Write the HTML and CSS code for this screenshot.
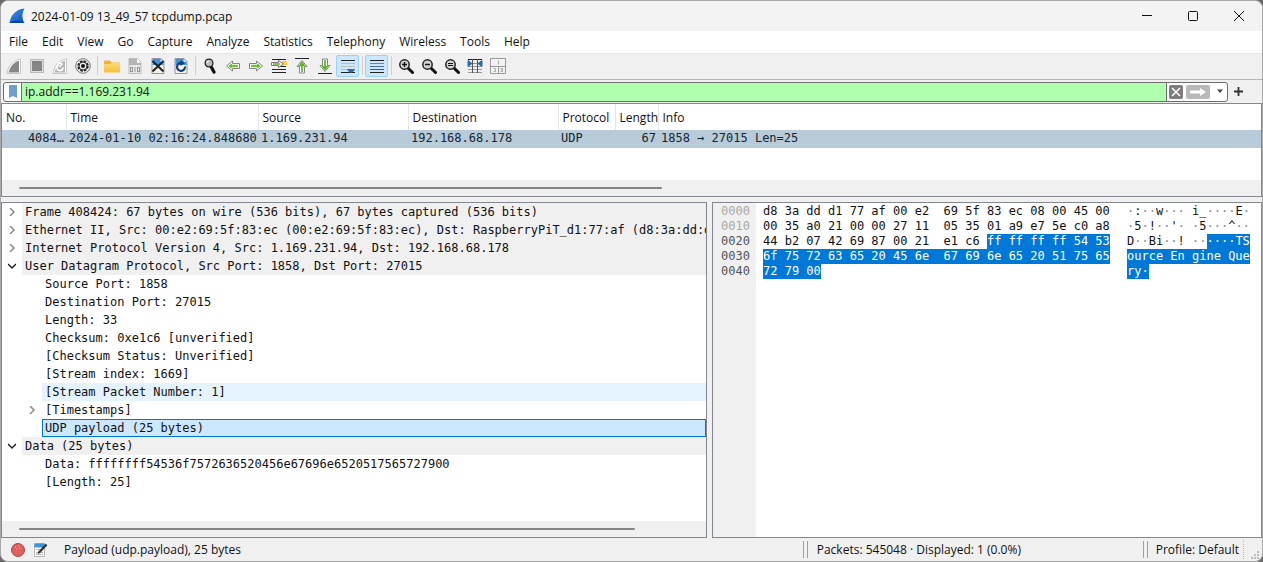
FILE: index.html
```html
<!DOCTYPE html>
<html lang="en">
<head>
<meta charset="utf-8">
<title>2024-01-09 13_49_57 tcpdump.pcap</title>
<link rel="stylesheet" href="styles.css">
</head>
<body>
<svg class="defs" width="0" height="0" aria-hidden="true">
  <defs>
    <linearGradient id="finBlue" x1="0" y1="0" x2="1" y2="1"><stop offset="0" stop-color="#4a9af0"/><stop offset="1" stop-color="#0a47b8"/></linearGradient>
    <linearGradient id="folder" x1="0" y1="0" x2="0" y2="1"><stop offset="0" stop-color="#ffd978"/><stop offset="1" stop-color="#f8bf3c"/></linearGradient>
    <symbol id="arrow" viewBox="0 0 16 16"><path d="M1.500 5.500h7V3L14.500 8 8.500 13v-2.500h-7z" fill="#fff" stroke="#858585"/><path d="M3.500 7.200h6V6l2.800 2-2.800 2V8.800h-6z" fill="#5cb81c" stroke="#5cb81c" stroke-width=".6"/></symbol>
    <symbol id="lens" viewBox="0 0 16 16"><path d="M10 10l4.500 4.500" stroke="#111" stroke-width="3" stroke-linecap="round"/><circle cx="6.500" cy="6.500" r="4.700" fill="#d4d4d4" stroke="#222" stroke-width="1.500"/></symbol>
    <symbol id="page" viewBox="0 0 16 16"><path d="M2 .5h9L14 3.500v12H2z" fill="#f4f3e6" stroke="#8c98a4"/><path d="M2.500 1h8.300l2.700 2.700V7h-11z" fill="#3b94dc"/><path d="M10.500 1v3h3z" fill="#d8e9f5"/></symbol>
  </defs>
</svg>
<div class="window">
  <header class="titlebar">
    <svg class="app-icon" viewBox="0 0 16 16"><path d="M.5 15C1.500 7 6.500 1.500 15.500.5 12.500 5.500 13 11 15.500 15z" fill="url(#finBlue)"/><path d="M.5 15c1-1.500 3-2.500 7-2.500s6 1 8 2.500z" fill="#0845a8"/></svg>
    <h1 class="title">2024-01-09 13_49_57 tcpdump.pcap</h1>
    <div class="caption">
      <button aria-label="Minimize"><svg viewBox="0 0 12 12"><path d="M1 5.500h10" stroke="#111"/></svg></button>
      <button aria-label="Maximize"><svg viewBox="0 0 12 12"><rect x="1.500" y="1.500" width="9" height="9" rx="1" fill="none" stroke="#111"/></svg></button>
      <button aria-label="Close"><svg viewBox="0 0 12 12"><path d="M1 1l10 10M11 1L1 11" stroke="#111"/></svg></button>
    </div>
  </header>
  <nav class="menubar">
    <button>File</button><button>Edit</button><button>View</button><button>Go</button><button>Capture</button><button>Analyze</button><button>Statistics</button><button>Telephony</button><button>Wireless</button><button>Tools</button><button>Help</button>
  </nav>
  <div class="toolbar" role="toolbar">
    <button aria-label="Start capture"><svg viewBox="0 0 16 16"><path d="M1 15.500C2 8 7 2 14.500 1v14.500z" fill="#fff" stroke="#c4c4c4"/><path d="M2.500 14.500C4 8.500 8 4 13 2.800v11.700z" fill="#868686"/></svg></button>
    <button aria-label="Stop capture"><svg viewBox="0 0 16 16"><rect x="1.500" y="1.500" width="13" height="13" fill="#ddd" stroke="#bbb"/><rect x="3" y="3" width="10" height="10" fill="#858585"/></svg></button>
    <button aria-label="Restart capture"><svg viewBox="0 0 16 16"><path d="M1 15.500C2 8 7 2 14.500 1v14.500z" fill="#fff" stroke="#c4c4c4"/><path d="M2.500 14.500C4 8.500 8 4 13 2.800v11.700z" fill="#b4b4b4"/><path d="M11 9.500A3 3 0 1 1 7 6.800M6 4.800l4 1.300-2.500 3" fill="none" stroke="#fff" stroke-width="1.500"/></svg></button>
    <button aria-label="Capture options"><svg viewBox="0 0 16 16"><circle cx="8" cy="8" r="7.300" fill="#eee" stroke="#777"/><circle cx="8" cy="8" r="4.800" fill="none" stroke="#222" stroke-width="1.800" stroke-dasharray="2.600 1.170"/><circle cx="8" cy="8" r="4" fill="none" stroke="#333" stroke-width="1"/><circle cx="8" cy="8" r="2" fill="#111"/></svg></button>
    <span class="sep"></span>
    <button aria-label="Open"><svg viewBox="0 0 16 16"><path d="M0 2.500h6l2 2h8V14H0z" fill="#eeb43a"/><path d="M0 6h6l2-1h8v9.500H0z" fill="url(#folder)"/></svg></button>
    <button aria-label="Save"><svg viewBox="0 0 16 16"><path d="M2 .5h8.500L14 4v11.500H2z" fill="#e8e8e8" stroke="#bdbdbd"/><path d="M2 1h8v4h4v2H2z" fill="#b5b5b5"/><path d="M10 .5V4.500h4z" fill="#f4f4f4"/><g fill="none" stroke="#999"><rect x="3.500" y="9.500" width="2" height="4"/><path d="M8 9v5"/><rect x="10.500" y="9.500" width="2" height="4"/></g></svg></button>
    <button aria-label="Close file"><svg viewBox="0 0 16 16"><use href="#page"/><path d="M2.500 3l11 10.500M13.500 3l-11 10.500" stroke="#222" stroke-width="2"/></svg></button>
    <button aria-label="Reload"><svg viewBox="0 0 16 16"><use href="#page"/><path d="M12 8.500A4 4 0 1 1 8.500 5" fill="none" stroke="#173c7c" stroke-width="2.200"/><path d="M7.500 2v6l4.500-3z" fill="#173c7c"/></svg></button>
    <span class="sep"></span>
    <button aria-label="Find"><svg viewBox="0 0 16 16"><path d="M9 8.500l3 5.500" stroke="#111" stroke-width="3.200" stroke-linecap="round"/><circle cx="7" cy="5" r="3.900" fill="#bbb" stroke="#222" stroke-width="1.300"/><path d="M5 5a2 2 0 0 1 2-2" fill="none" stroke="#fff"/></svg></button>
    <button aria-label="Back"><svg class="flip" viewBox="0 0 16 16"><use href="#arrow"/></svg></button>
    <button aria-label="Forward"><svg viewBox="0 0 16 16"><use href="#arrow"/></svg></button>
    <button aria-label="Go to packet"><svg viewBox="0 0 16 16"><path d="M1 1.500h14M1 11.500h14M1 14.500h14M8 8.500h7" stroke="#222"/><path d="M11 3h5v4h-5z" fill="#f9ca4b"/><path d="M.5 4.500h7v-2l5 3.500-5 3.500v-2h-7z" fill="#fff" stroke="#777"/><path d="M2 6h7" stroke="#5cb81c" stroke-width="1.500"/></svg></button>
    <button aria-label="First packet"><svg viewBox="0 0 16 16"><path d="M1 .5h14" stroke="#222"/><path d="M5.500 15V8.500H3L8 2.500l5 6h-2.500V15z" fill="#fff" stroke="#858585"/><path d="M8 14V7M6 7.500l2-2.800 2 2.800z" fill="#5cb81c" stroke="#5cb81c" stroke-width="1.700"/></svg></button>
    <button aria-label="Last packet"><svg viewBox="0 0 16 16"><path d="M1 15.500h14" stroke="#222"/><path d="M5.500 1v6.500H3L8 13.500l5-6h-2.500V1z" fill="#fff" stroke="#858585"/><path d="M8 2v7M6 8.500l2 2.800 2-2.800z" fill="#5cb81c" stroke="#5cb81c" stroke-width="1.700"/></svg></button>
    <button class="on" aria-label="Auto scroll" aria-pressed="true"><svg viewBox="0 0 14 14"><path d="M0 1.500h14M0 13.500h14" stroke="#222"/><path d="M0 4.500h14M0 7.500h14M0 10.500h14" stroke="#b9bdb9"/><path d="M6 10h8l-1 2-3 2-3-2z" fill="#3467ac"/></svg></button>
    <span class="sep"></span>
    <button class="on" aria-label="Colorize" aria-pressed="true"><svg viewBox="0 0 14 14"><path d="M0 1.500h14M0 13.500h14" stroke="#222"/><path d="M0 4.500h14" stroke="#b06a72"/><path d="M0 7.500h14" stroke="#4a6ca8"/><path d="M0 10.500h14" stroke="#555"/></svg></button>
    <span class="sep"></span>
    <button aria-label="Zoom in"><svg viewBox="0 0 16 16"><use href="#lens"/><path d="M4 6.500h5M6.500 4v5" stroke="#111" stroke-width="1.400"/></svg></button>
    <button aria-label="Zoom out"><svg viewBox="0 0 16 16"><use href="#lens"/><path d="M4 6.500h5" stroke="#111" stroke-width="1.400"/></svg></button>
    <button aria-label="Normal size"><svg viewBox="0 0 16 16"><use href="#lens"/><path d="M4 5.500h5M4 7.500h5" stroke="#111"/></svg></button>
    <button aria-label="Resize columns"><svg viewBox="0 0 16 16"><path d="M1 1.500h14" stroke="#222"/><path d="M1 5.500h14M1 8.500h14M1 11.500h14M1 14.500h14" stroke="#999"/><path d="M5.500 1v14M10.500 1v14" stroke="#555"/><path d="M1 2.500l4 3-4 3zM15 2.500l-4 3 4 3z" fill="#3467ac" stroke="#3467ac"/></svg></button>
    <button aria-label="Layout"><svg viewBox="0 0 16 16"><path d="M.5.500h15v15H.5zM.5 8.500h15M8.500 8.500v7" fill="#f2f2f2" stroke="#999"/><path d="M8.500 2.500v4M3.500 10.500h2v3h-2M10.500 10.500h2v3h-2M11 12h1" fill="none" stroke="#aaa"/></svg></button>
  </div>
  <div class="filterbar">
    <div class="filter">
      <button class="bookmark" aria-label="Bookmarks"><svg viewBox="0 0 10 16"><path d="M1 1h8v13l-4-2-4 2z" fill="#6f9fce"/></svg></button>
      <input type="text" aria-label="Display filter" value="ip.addr==1.169.231.94">
      <button class="clear" aria-label="Clear"><svg viewBox="0 0 14 14"><rect width="14" height="14" rx="2" fill="#7d7d7d"/><path d="M3 3l8 8M11 3l-8 8" stroke="#fff" stroke-width="1.600"/></svg></button>
      <button class="apply" aria-label="Apply"><svg viewBox="0 0 24 14"><rect width="24" height="14" rx="2" fill="#b9b9b9"/><path d="M4 5.500h10V3l6 4-6 4V8.500H4z" fill="#fff"/></svg></button>
      <button class="history" aria-label="History"><svg viewBox="0 0 8 5"><path d="M1 .5h6L4 4z" fill="#444"/></svg></button>
    </div>
    <button class="add" aria-label="Add filter button"><svg viewBox="0 0 8 8"><path d="M4 0v8M0 4h8" stroke="#333" stroke-width="1.600"/></svg></button>
  </div>
  <section class="packets">
    <table>
      <colgroup><col class="c-no"><col class="c-time"><col class="c-addr"><col class="c-addr"><col class="c-proto"><col class="c-len"><col></colgroup>
      <thead><tr><th>No.</th><th>Time</th><th>Source</th><th>Destination</th><th>Protocol</th><th>Length</th><th>Info</th></tr></thead>
      <tbody><tr><td class="num">4084…</td><td>2024-01-10 02:16:24.848680</td><td>1.169.231.94</td><td>192.168.68.178</td><td>UDP</td><td class="num">67</td><td>1858 → 27015 Len=25</td></tr></tbody>
    </table>
    <div class="scroll"><div class="thumb"></div></div>
  </section>
  <main class="panes">
    <section class="details">
      <ul class="tree">
        <li class="proto"><svg class="tw" viewBox="0 0 8 8"><path d="M2 0l4 4-4 4"/></svg><span>Frame 408424: 67 bytes on wire (536 bits), 67 bytes captured (536 bits)</span></li>
        <li class="proto"><svg class="tw" viewBox="0 0 8 8"><path d="M2 0l4 4-4 4"/></svg><span>Ethernet II, Src: 00:e2:69:5f:83:ec (00:e2:69:5f:83:ec), Dst: RaspberryPiT_d1:77:af (d8:3a:dd:d1:77:af)</span></li>
        <li class="proto"><svg class="tw" viewBox="0 0 8 8"><path d="M2 0l4 4-4 4"/></svg><span>Internet Protocol Version 4, Src: 1.169.231.94, Dst: 192.168.68.178</span></li>
        <li class="proto"><svg class="tw open" viewBox="0 0 8 8"><path d="M0 2l4 4 4-4"/></svg><span>User Datagram Protocol, Src Port: 1858, Dst Port: 27015</span></li>
        <li class="field"><span>Source Port: 1858</span></li>
        <li class="field"><span>Destination Port: 27015</span></li>
        <li class="field"><span>Length: 33</span></li>
        <li class="field"><span>Checksum: 0xe1c6 [unverified]</span></li>
        <li class="field"><span>[Checksum Status: Unverified]</span></li>
        <li class="field"><span>[Stream index: 1669]</span></li>
        <li class="field hover"><span>[Stream Packet Number: 1]</span></li>
        <li class="field"><svg class="tw" viewBox="0 0 8 8"><path d="M2 0l4 4-4 4"/></svg><span>[Timestamps]</span></li>
        <li class="field selected"><span>UDP payload (25 bytes)</span></li>
        <li class="proto"><svg class="tw open" viewBox="0 0 8 8"><path d="M0 2l4 4 4-4"/></svg><span>Data (25 bytes)</span></li>
        <li class="field"><span>Data: ffffffff54536f7572636520456e67696e6520517565727900</span></li>
        <li class="field"><span>[Length: 25]</span></li>
      </ul>
      <div class="scroll"><div class="thumb"></div></div>
    </section>
    <section class="bytes">
<pre class="offsets"><i>0000</i>
<i>0010</i>
0020
0030
0040</pre>
<pre class="hex">d8 3a dd d1 77 af 00 e2  69 5f 83 ec 08 00 45 00
00 35 a0 21 00 00 27 11  05 35 01 a9 e7 5e c0 a8
44 b2 07 42 69 87 00 21  e1 c6 <mark>ff ff ff ff 54 53</mark>
<mark>6f 75 72 63 65 20 45 6e  67 69 6e 65 20 51 75 65</mark>
<mark>72 79 00</mark></pre>
<pre class="ascii"><i>·</i>:<i>··</i>w<i>···</i> i_<i>····</i>E<i>·</i>
<i>·</i>5<i>·</i>!<i>··</i>'<i>·</i> <i>·</i>5<i>···</i>^<i>··</i>
D<i>··</i>Bi<i>··</i>! <i>··</i><mark>····TS</mark>
<mark>ource En gine Que</mark>
<mark>ry·</mark></pre>
    </section>
  </main>
  <footer class="status">
    <button class="expert" aria-label="Expert information"><svg viewBox="0 0 14 14"><circle cx="7" cy="7" r="6.500" fill="#e05f5f" stroke="#a84848"/><path d="M4 4h1M7 3h1M5 6h1M8 5h1" stroke="#f5b3a6"/></svg></button>
    <button class="note" aria-label="Capture file properties"><svg viewBox="0 0 14 14"><path d="M.5.500h10v13H.5z" fill="#fff" stroke="#b8b8b8"/><path d="M.5.500h10v4H.5z" fill="#3b94dc"/><path d="M2 6.500h5M2 9.500h7M2 11.500h7" stroke="#bbb"/><path d="M5 9.500L12.500 1.500" stroke="#333" stroke-width="2.400"/><path d="M3.500 11l1-2.500 1.500 1.500z" fill="#222"/></svg></button>
    <span class="msg">Payload (udp.payload), 25 bytes</span>
    <span class="grip"></span>
    <span class="count">Packets: 545048 · Displayed: 1 (0.0%)</span>
    <span class="grip"></span>
    <button class="profile">Profile: Default</button>
    <svg class="sizer" viewBox="0 0 9 9"><path d="M6 0h2v2H6zM3 3h2v2H3zM6 3h2v2H6zM0 6h2v2H0zM3 6h2v2H3zM6 6h2v2H6z" fill="#bcbcbc"/></svg>
  </footer>
</div>
</body>
</html>
```
FILE: styles.css
```css
* { box-sizing: border-box; }
body {
  margin: 0;
  background: #6a6a6c;
  font-family: "Open Sans", "Noto Sans", sans-serif;
  font-size: 12px;
  color: #111;
}
button {
  border: 0;
  padding: 0;
  background: none;
  font: inherit;
  color: inherit;
}
svg { display: block; }
.defs { position: absolute; }
.window {
  display: flex;
  flex-direction: column;
  height: 100vh;
  border: 1px solid #a9a9ab;
  border-radius: 8px;
  background: #f0f0f0;
  overflow: hidden;
}
.titlebar {
  display: flex;
  align-items: center;
  flex: none;
  height: 30px;
  padding-left: 8px;
  background: #f3f3f3;
}
.app-icon { width: 16px; height: 16px; }
.title {
  flex: 1;
  margin: 0 0 0 6px;
  font-size: 12px;
  font-weight: 400;
}
.caption { display: flex; }
.caption button {
  display: grid;
  place-items: center;
  width: 46px;
  height: 28px;
}
.caption svg { width: 12px; height: 12px; }
.menubar {
  display: flex;
  flex: none;
  height: 22px;
  padding: 0 1px 2px;
  background: #fff;
}
.menubar button { padding: 0 7px; }
.toolbar {
  display: flex;
  align-items: center;
  flex: none;
  height: 27px;
  padding: 0 1px 2px;
  border-top: 1px solid #e6e6e6;
  border-bottom: 1px solid #b4b4b4;
}
.toolbar button {
  display: grid;
  place-items: center;
  width: 23px;
  height: 22px;
}
.toolbar svg { width: 16px; height: 16px; }
.toolbar .on {
  border: 1px solid #99d1ff;
  border-radius: 2px;
  background: #cce8ff;
}
.toolbar .on svg { width: 14px; height: 14px; }
.flip { transform: scaleX(-1); }
.sep {
  width: 6px;
  height: 19px;
  background: linear-gradient(#cfcfcf, #cfcfcf) center / 1px 100% no-repeat;
}
.filterbar {
  display: flex;
  align-items: center;
  flex: none;
  height: 23px;
  padding: 0 19px 0 2px;
}
.filter {
  display: flex;
  flex: 1;
  align-items: center;
  height: 20px;
  border: 1px solid #6e6e6e;
  border-radius: 3px;
  background: #fff;
  overflow: hidden;
}
.bookmark {
  display: grid;
  place-items: center;
  width: 17px;
}
.bookmark svg { width: 10px; height: 16px; }
.filter input {
  flex: 1;
  min-width: 0;
  height: 18px;
  padding: 0 3px;
  border: solid #6e6e6e;
  border-width: 0 1px;
  background: #afffaf;
  font: inherit;
  color: #111;
}
.clear { margin-left: 2px; }
.clear svg { width: 14px; height: 14px; }
.apply { margin-left: 3px; }
.apply svg { width: 24px; height: 14px; }
.history { margin: 0 3px 0 6px; }
.history svg { width: 8px; height: 5px; }
.add { margin-left: 6px; }
.add svg { width: 9px; height: 9px; }
.packets {
  display: flex;
  flex-direction: column;
  flex: none;
  height: 94px;
  border: 1px solid #828790;
  background: #fff;
}
table {
  width: 100%;
  table-layout: fixed;
  border-collapse: collapse;
}
.c-no { width: 64px; }
.c-time { width: 192px; }
.c-addr { width: 150px; }
.c-proto { width: 57px; }
.c-len { width: 43px; }
th {
  height: 26px;
  padding: 0 2px 0 4px;
  border-right: 1px solid #e5e5e5;
  font-weight: 400;
  text-align: left;
}
th:last-child { border-right: 0; }
td {
  height: 18px;
  padding: 0 2px 2px 3px;
  line-height: 16px;
  background: #b9cbd9;
  color: #12272e;
  white-space: nowrap;
}
.num { text-align: right; }
td, .tree, pre {
  font-family: "DejaVu Sans Mono", "Liberation Mono", monospace;
  font-size: 12px;
}
.scroll {
  flex: none;
  height: 16px;
  margin-top: auto;
  padding: 7px 17px;
  background: #f0f0f0;
}
.thumb {
  width: 52.5%;
  height: 2px;
  border-radius: 1px;
  background: #868686;
}
.panes {
  display: grid;
  grid-template-columns: 706fr 550fr;
  gap: 5px;
  flex: 1;
  min-height: 0;
  padding-top: 5px;
}
.details, .bytes {
  display: flex;
  min-width: 0;
  border: 1px solid #828790;
  background: #fff;
  overflow: hidden;
}
.details { flex-direction: column; }
.details .thumb { width: 92%; }
.tree {
  margin: 0;
  padding: 0;
  list-style: none;
  line-height: 18px;
}
.tree li {
  display: flex;
  align-items: center;
  height: 18px;
}
.tree span {
  flex: 1;
  height: 18px;
  padding-left: 3px;
  white-space: nowrap;
}
.proto span { background: #f0f0f0; }
.proto .tw { margin: 0 6px; }
.field { padding-left: 40px; }
.field .tw { margin: 0 6px 0 -14px; }
.tw {
  flex: none;
  width: 8px;
  height: 8px;
  fill: none;
  stroke: #888;
  stroke-width: 1.5px;
}
.tw.open { stroke: #222; }
.hover span { background: #e5f3ff; }
.tree .selected span {
  padding-left: 2px;
  border: 1px solid #0078d7;
  background: #cce8ff;
  line-height: 16px;
}
pre {
  margin: 0;
  line-height: 15px;
}
pre i { font-style: normal; color: #8a8a8a; }
.offsets {
  width: 43px;
  padding: 1px 0 0 8px;
  background: #f0f0f0;
  color: #555;
}
.offsets i { color: #a8aca4; }
.hex {
  width: 371px;
  padding: 1px 0 0 7px;
}
.ascii { padding-top: 1px; }
mark {
  display: inline-block;
  height: 15px;
  background: #0078d7;
  color: #fff;
}
.status {
  display: flex;
  align-items: center;
  flex: none;
  height: 23px;
  padding-left: 10px;
}
.status svg { width: 14px; height: 14px; }
.note { margin-left: 9px; }
.msg { flex: 1; margin-left: 16px; }
.grip {
  width: 5px;
  height: 17px;
  border: solid #a0a0a0;
  border-width: 0 1px;
}
.count { width: 326px; margin-left: 9px; }
.profile {
  height: 19px;
  margin-left: 8px;
  padding-right: 4px;
  border-right: 1px dotted #bbb;
}
.status .sizer {
  align-self: flex-end;
  width: 9px;
  height: 9px;
  margin: 0 2px 1px 7px;
}
```
